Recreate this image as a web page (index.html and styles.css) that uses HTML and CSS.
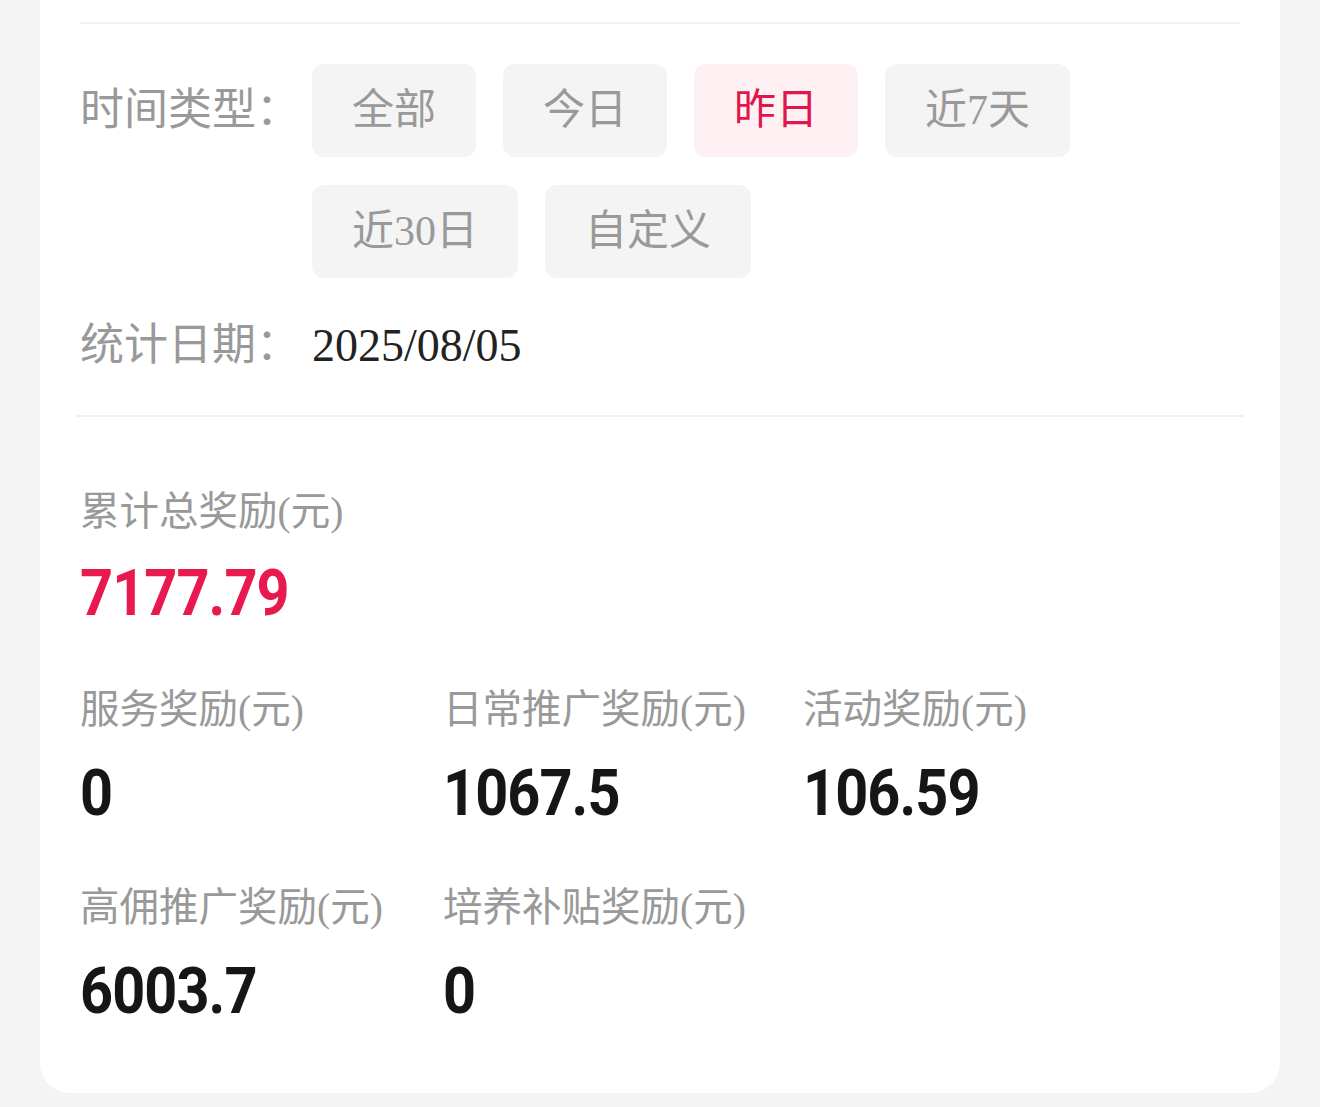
FILE: index.html
```html
<!DOCTYPE html>
<html lang="zh-CN">
<head>
<meta charset="utf-8"/>
<title>奖励统计</title>
<link rel="stylesheet" href="styles.css">
</head>
<body>
<div class="card">
	<div class="rule"></div>

	<div class="filter">
		<div class="filter_label">时间类型：</div>
		<ul class="tabs">
			<li>全部</li>
			<li>今日</li>
			<li class="on">昨日</li>
			<li>近7天</li>
			<li>近30日</li>
			<li>自定义</li>
		</ul>
	</div>

	<div class="date_row">
		<span class="filter_label">统计日期：</span>
		<span class="date">2025/08/05</span>
	</div>

	<div class="rule rule_wide"></div>

	<div class="total">
		<div class="label">累计总奖励(元)</div>
		<div class="num red"><span>7177.79</span></div>
	</div>

	<div class="items">
		<div class="item">
			<div class="label">服务奖励(元)</div>
			<div class="num"><span>0</span></div>
		</div>
		<div class="item">
			<div class="label">日常推广奖励(元)</div>
			<div class="num"><span>1067.5</span></div>
		</div>
		<div class="item">
			<div class="label">活动奖励(元)</div>
			<div class="num"><span>106.59</span></div>
		</div>
		<div class="item">
			<div class="label">高佣推广奖励(元)</div>
			<div class="num"><span>6003.7</span></div>
		</div>
		<div class="item">
			<div class="label">培养补贴奖励(元)</div>
			<div class="num"><span>0</span></div>
		</div>
	</div>
</div>
</body>
</html>
```

FILE: styles.css
```css
html,body,ul{margin:0;padding:0;}
li{list-style:none;}
body{background:#f4f4f4;font-family:"Liberation Serif","Noto Sans CJK SC",sans-serif;height:1107px;}

.card{margin:0 40px;background:#fff;border-radius:0 0 30px 30px;padding:22px 40px 66px;}
.rule{height:2px;background:#f1f1f1;}
.rule_wide{margin:39px -4px 0;}

/* 时间类型 */
.filter{display:flex;margin-top:40px;}
.filter_label{width:232px;flex:none;font-size:44px;color:#999;line-height:93px;}
.tabs{display:flex;flex-wrap:wrap;gap:28px 27px;width:800px;}
.tabs li{height:93px;line-height:93px;padding:0 40px;font-size:42px;color:#999;background:#f4f4f4;border-radius:12px;}
.tabs li.on{color:#e0164d;background:#fff0f3;}

.date_row{display:flex;margin-top:38px;height:60px;align-items:center;}
.date_row .filter_label{line-height:60px;}
.date{font-family:"Liberation Serif",serif;font-size:46px;color:#222;line-height:60px;}

/* 奖励 */
.total{margin-top:70px;}
.label{font-size:39.5px;line-height:50px;color:#999;white-space:nowrap;}
.num{font-family:Roboto,"DejaVu Sans",sans-serif;font-weight:bold;font-size:64px;line-height:70px;color:#161616;margin-top:22px;}
.num span{display:inline-block;letter-spacing:-1px;transform:scaleX(0.9);transform-origin:left center;}
.num.red{color:#e8194e;}

.items{display:grid;grid-template-columns:363px 360px 360px;row-gap:54px;margin-top:56px;}
.item .num{margin-top:24px;}
```
